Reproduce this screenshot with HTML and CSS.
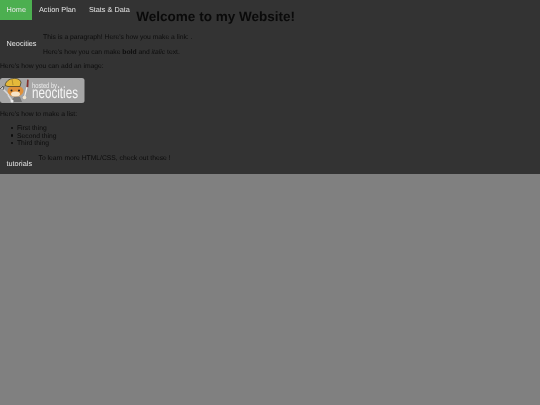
FILE: index.html
```html
<!DOCTYPE html>
<html lang="en">
<head>
<meta charset="utf-8">
<title>Welcome to my Website!</title>
<link rel="stylesheet" href="styles.css">
</head>
<body>
<div class="page">
  <a class="nav active" href="#">Home</a>
  <a class="nav" href="#">Action Plan</a>
  <a class="nav" href="#">Stats &amp; Data</a>
  <h1>Welcome to my Website!</h1>
  <a class="nav side" href="#">Neocities</a>
  <p>This is a paragraph! Here's how you make a link: .</p>
  <p>Here's how you can make <strong>bold</strong> and <em>italic</em> text.</p>
  <p>Here's how you can add an image:</p>
  <svg class="badge" viewBox="0 0 85 25" width="85" height="25" role="img" aria-label="hosted by neocities">
    <rect x="0" y="0" width="84.500" height="25" rx="2.500" fill="#a6a6a6"/>
    <path d="M1 9l8 8M8 17l5 7" stroke="#d8d8d8" stroke-width="1.600" fill="none"/>
    <path d="M0 11l3-3M3 12l1-4" stroke="#444" stroke-width=".8" fill="none"/>
    <path d="M10 24l5-6 5 1 2 5z" fill="#777"/>
    <circle cx="12" cy="23" r="1.600" fill="#eee"/>
    <ellipse cx="15.500" cy="13" rx="8" ry="5.500" fill="#e0913a"/>
    <ellipse cx="15.500" cy="16" rx="4.500" ry="2.500" fill="#f6e4c8"/>
    <path d="M5 7.500C6 2 11 0 16 .5c3 .3 4.500 2 5 4l-1 4H8z" fill="#e5b93a" stroke="#3a3424" stroke-width=".7"/>
    <path d="M12 1l1 6" stroke="#a8842a" stroke-width=".8"/>
    <circle cx="11.500" cy="12.500" r="1" fill="#222"/>
    <circle cx="19" cy="12.500" r="1" fill="#222"/>
    <path d="M24.500 19l2.500-10" stroke="#eee" stroke-width="1.200" fill="none"/>
    <circle cx="24.500" cy="19.500" r="1.800" fill="#f0e6d2"/>
    <path d="M26.500 9l.6-7.500 1.600.2-.4 7.500z" fill="#84302c"/>
    <text class="badge-small" x="32" y="10" textLength="25" lengthAdjust="spacingAndGlyphs">hosted by</text>
    <text class="badge-large" x="32" y="20" textLength="46" lengthAdjust="spacingAndGlyphs">neocities</text>
  </svg>
  <p>Here's how to make a list:</p>
  <ul>
    <li>First thing</li>
    <li>Second thing</li>
    <li>Third thing</li>
  </ul>
  <a class="nav foot" href="#">tutorials</a>
  <p>To learn more HTML/CSS, check out these !</p>
</div>
</body>
</html>
```
FILE: styles.css
```css
html, body {
  margin: 0;
  height: 100%;
  background: #808080;
}
body {
  font-family: "Liberation Sans", Arial, sans-serif;
  font-size: 6.750px;
  line-height: 1;
  color: #0c0c0c;
  text-rendering: geometricPrecision;
}
.page {
  background: #333;
  height: 174px;
  overflow: hidden;
  filter: blur(.25px);
}
.nav {
  float: left;
  padding: 6px 6.500px;
  height: 8px;
  line-height: 8px;
  font-size: 7.300px;
  color: #e6e6e6;
  text-decoration: none;
}
.active {
  background: #4caf50;
}
.side {
  clear: left;
}
.foot {
  clear: left;
  margin-top: -1px;
}
h1 {
  margin: 0;
  padding-top: 9px;
  height: 25px;
  font-size: 13.500px;
  line-height: 16px;
  color: #0a0a0a;
}
p {
  margin: 0 0 6px;
  line-height: 8.500px;
}
.badge {
  display: block;
  margin: 0 0 8px;
}
.badge-small {
  font-size: 7.500px;
  fill: #eee;
}
.badge-large {
  font-size: 16px;
  fill: #f5f5f5;
}
ul {
  margin: 6px 0 7px;
  padding-left: 17px;
  list-style: none;
}
li {
  line-height: 7.700px;
}
li::before {
  content: "";
  display: inline-block;
  width: 2.500px;
  height: 2.500px;
  margin-left: -6.500px;
  margin-right: 4px;
  border-radius: 50%;
  background: #0c0c0c;
  vertical-align: 1px;
}
```
